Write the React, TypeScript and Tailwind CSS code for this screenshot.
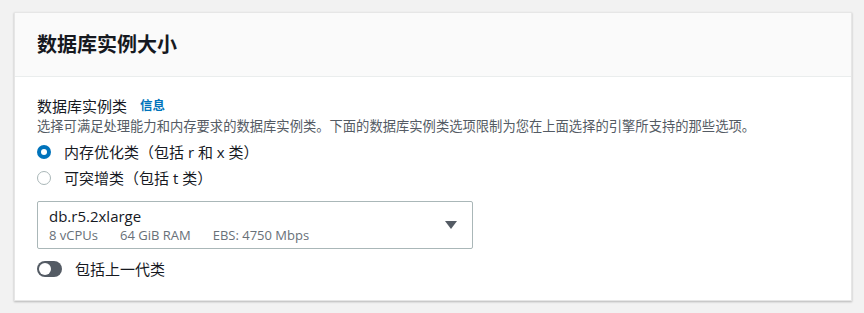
const font = { fontFamily: '"Open Sans", "Noto Sans CJK SC", sans-serif' };

export default function App() {
  return (
    <div
      className="h-[313px] w-[864px] bg-[#f2f2f2] pt-3 pl-[14px] pr-3"
      style={font}
    >
      <div className="h-[289px] w-[838px] bg-white shadow-[0_1px_2px_rgba(0,0,0,0.25)] border border-[#e6e6e6]">
        <div className="flex h-16 items-center border-b border-[#eaeded] bg-[#fafafa] pl-[22px]">
          <h2 className="text-[20px] font-bold leading-none text-[#16191f]">数据库实例大小</h2>
        </div>
        <div className="pl-[22px] pt-[18px]">
          <div className="flex items-center gap-[13px] leading-[22px]">
            <span className="text-[15px] text-[#16191f]">数据库实例类</span>
            <span className="text-[12.5px] font-bold text-[#0073bb]">信息</span>
          </div>
          <p className="text-[13.3px] leading-[18px] text-[#545b64]">
            选择可满足处理能力和内存要求的数据库实例类。下面的数据库实例类选项限制为您在上面选择的引擎所支持的那些选项。
          </p>
          <div className="mt-[4px] flex flex-col">
            <label className="flex h-[26px] items-center gap-[13px]">
              <span className="flex h-[14px] w-[14px] items-center justify-center rounded-full bg-[#0073bb]">
                <span className="h-[6px] w-[6px] rounded-full bg-white" />
              </span>
              <span className="text-[15px] text-[#16191f]">内存优化类（包括 r 和 x 类）</span>
            </label>
            <label className="flex h-[26px] items-center gap-[13px]">
              <span className="h-[14px] w-[14px] rounded-full border border-[#aab7b8] bg-white" />
              <span className="text-[15px] text-[#16191f]">可突增类（包括 t 类）</span>
            </label>
          </div>
          <div className="mt-[10px] flex h-12 w-[436px] items-center justify-between rounded-[2px] border border-[#aab7b8] pl-[11px] pr-[15px]">
            <div className="flex flex-col">
              <span className="text-[15px] leading-[20px] text-[#16191f]">db.r5.2xlarge</span>
              <div className="flex gap-[22px] text-[13px] leading-[18px] text-[#687078]">
                <span>8 vCPUs</span>
                <span>64 GiB RAM</span>
                <span>EBS: 4750 Mbps</span>
              </div>
            </div>
            <svg width="12" height="9" viewBox="0 0 12 9">
              <path d="M0 0 H12 L6 8 Z" fill="#545b64" />
            </svg>
          </div>
          <div className="mt-[9px] flex items-center gap-[13px]">
            <span className="flex h-[16px] w-[25px] items-center rounded-full bg-[#545b64] px-[2px]">
              <span className="h-[12px] w-[12px] rounded-full bg-white" />
            </span>
            <span className="text-[15px] text-[#16191f]">包括上一代类</span>
          </div>
        </div>
      </div>
    </div>
  );
}
